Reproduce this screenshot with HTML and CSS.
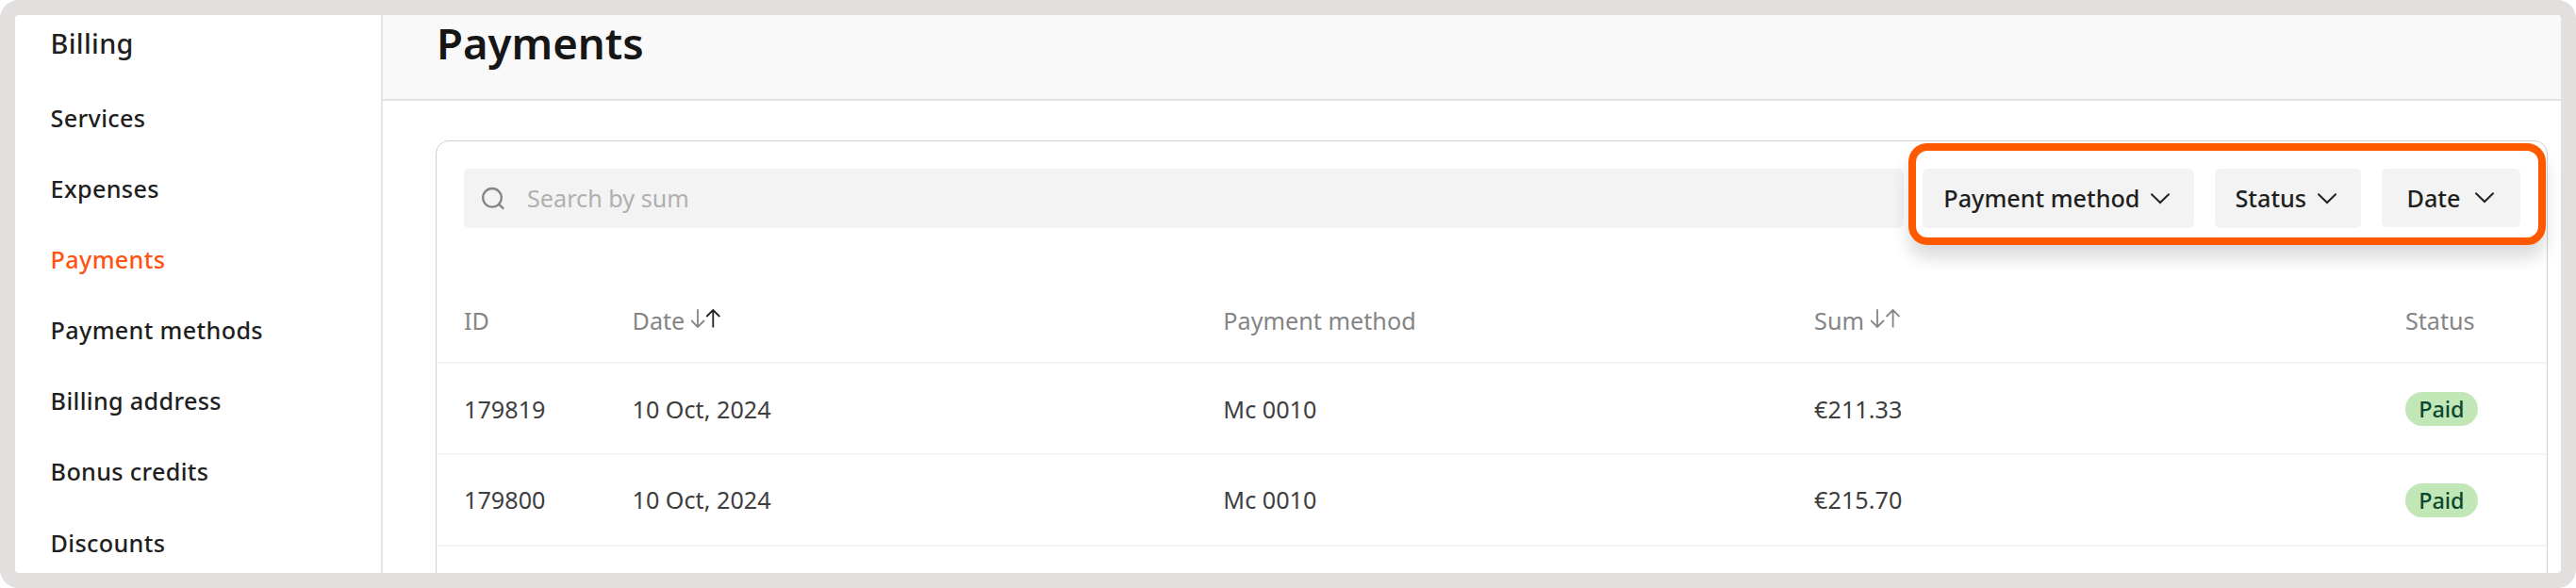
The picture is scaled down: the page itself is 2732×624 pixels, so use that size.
FILE: index.html
```
<!DOCTYPE html>
<html lang="en">
<head>
<meta charset="utf-8">
<title>Payments</title>
<link rel="stylesheet" href="styles.css">
</head>
<body>
<div class="frame">
  <nav class="sidebar">
    <div class="sidebar-title">Billing</div>
    <a class="nav-item">Services</a>
    <a class="nav-item">Expenses</a>
    <a class="nav-item active">Payments</a>
    <a class="nav-item">Payment methods</a>
    <a class="nav-item">Billing address</a>
    <a class="nav-item">Bonus credits</a>
    <a class="nav-item">Discounts</a>
  </nav>
  <main class="main">
    <header class="header"><h1>Payments</h1></header>
    <section class="card">
      <div class="toolbar">
        <div class="search">
          <svg class="search-icon" width="26" height="26" viewBox="0 0 26 26"><circle cx="12" cy="11.8" r="9.8"/><path d="M18.6 18.4 L24.2 23.6"/></svg>
          <span>Search by sum</span>
        </div>
        <button class="filter method">Payment method<svg class="chevron" width="20" height="12" viewBox="0 0 20 12"><path d="M1 1.2 L10 10 L19 1.2"/></svg></button>
        <button class="filter status">Status<svg class="chevron" width="20" height="12" viewBox="0 0 20 12"><path d="M1 1.2 L10 10 L19 1.2"/></svg></button>
        <button class="filter date">Date<svg class="chevron" width="20" height="12" viewBox="0 0 20 12"><path d="M1 1.2 L10 10 L19 1.2"/></svg></button>
        <div class="highlight"></div>
      </div>
      <div class="row head">
        <div>ID</div>
        <div>Date<svg class="sort" width="31" height="20" viewBox="0 0 31 20"><path d="M7 .3V19M0 12 7 19l7-7"/><path class="on" d="M23.300 19.500V1M16.300 8 23.300 1l7 7"/></svg></div>
        <div>Payment method</div>
        <div>Sum<svg class="sort" width="31" height="20" viewBox="0 0 31 20"><path d="M7 .3V19M0 12 7 19l7-7"/><path d="M23.600 19.500V1M16.600 8 23.600 1l7 7"/></svg></div>
        <div>Status</div>
      </div>
      <div class="row first">
        <div>179819</div><div>10 Oct, 2024</div><div>Mc 0010</div><div>€211.33</div><div><span class="badge">Paid</span></div>
      </div>
      <div class="row second">
        <div>179800</div><div>10 Oct, 2024</div><div>Mc 0010</div><div>€215.70</div><div><span class="badge">Paid</span></div>
      </div>
    </section>
  </main>
</div>
</body>
</html>
```
FILE: styles.css
```
* { box-sizing: border-box; }
body {
  margin: 0;
  background: #fff;
  font-family: "Noto Sans", sans-serif;
  font-size: 25.2px;
  color: #1f1f1f;
}
.frame {
  display: flex;
  height: 624px;
  overflow: hidden;
  border: 16px solid #e2dfde;
  border-radius: 20px;
  background: #fff;
}
.sidebar {
  flex: 0 0 390px;
  padding-left: 37.6px;
  border-right: 2px solid #e3e3e8;
  font-weight: 500;
  letter-spacing: 0.33px;
}
.sidebar-title {
  height: 71.95px;
  line-height: 60px;
  font-size: 28.8px;
}
.nav-item {
  display: block;
  height: 75.1px;
  line-height: 75.1px;
}
.nav-item.active { color: #ff5316; }
.main { flex: 1; min-width: 0; }
.header {
  height: 91px;
  padding-left: 57px;
  background: #f9f9f9;
  border-bottom: 2px solid #e2e2e2;
}
h1 {
  margin: 0;
  font-size: 45.5px;
  font-weight: 600;
  line-height: 58px;
  color: #161616;
}
.card {
  height: 500px;
  margin: 42px 14px 0 56px;
  border: 1px solid #d0d0d5;
  border-radius: 14px;
}
.toolbar {
  position: relative;
  display: flex;
  align-items: flex-start;
  height: 142px;
  padding: 29px 28px 0 29px;
}
.search {
  display: flex;
  align-items: center;
  flex: 1;
  height: 63px;
  margin-right: 20.3px;
  padding-left: 18px;
  border-radius: 5px;
  background: #f3f3f3;
  color: #b0b0b0;
  line-height: 61px;
}
.search-icon {
  width: 26px;
  margin-right: 23px;
  stroke: #858585;
  stroke-width: 2.3;
  fill: none;
}
.filter {
  display: flex;
  align-items: center;
  height: 63px;
  margin: 0;
  padding: 0 0 1px 22px;
  border: 0;
  border-radius: 5px;
  background: #f3f3f3;
  font: 500 25.2px "Noto Sans", sans-serif;
  color: #1f1f1f;
}
.method { width: 287.7px; margin-right: 21.5px; }
.status { width: 155px; margin-right: 22px; }
.date { width: 147.5px; height: 62px; padding: 0 0 0 27px; }
.chevron {
  margin-left: 11.8px;
  margin-top: 2px;
  fill: none;
  stroke: #222;
  stroke-width: 2;
  stroke-linecap: round;
}
.date .chevron { margin-left: 15.3px; margin-top: 0; }
.highlight {
  position: absolute;
  top: 2px;
  right: 1px;
  width: 676px;
  height: 108px;
  border: 8px solid #ff5900;
  border-radius: 20px;
  box-shadow: 0 14px 18px rgba(0, 0, 0, 0.14);
}
.row {
  display: grid;
  grid-template-columns: 178.5px 626.8px 626.8px 626.8px 1fr;
  align-items: center;
  padding-left: 29px;
  border-bottom: 2px solid #f5f5f5;
  color: #3e3e3e;
  white-space: nowrap;
}
.row.head { height: 94px; color: #858585; line-height: 96px; }
.row.first { height: 97px; }
.row.second { height: 96.5px; }
.sort {
  margin-left: 7px;
  fill: none;
  stroke: #858585;
  stroke-width: 1.8;
  vertical-align: 2.5px;
}
.sort .on { stroke: #222; }
.badge {
  display: block;
  width: 77px;
  height: 36px;
  margin-top: 1.5px;
  border-radius: 18px;
  background: #c0e7b5;
  color: #0d472e;
  font-size: 23.4px;
  font-weight: 500;
  line-height: 36px;
  text-align: center;
}
```
